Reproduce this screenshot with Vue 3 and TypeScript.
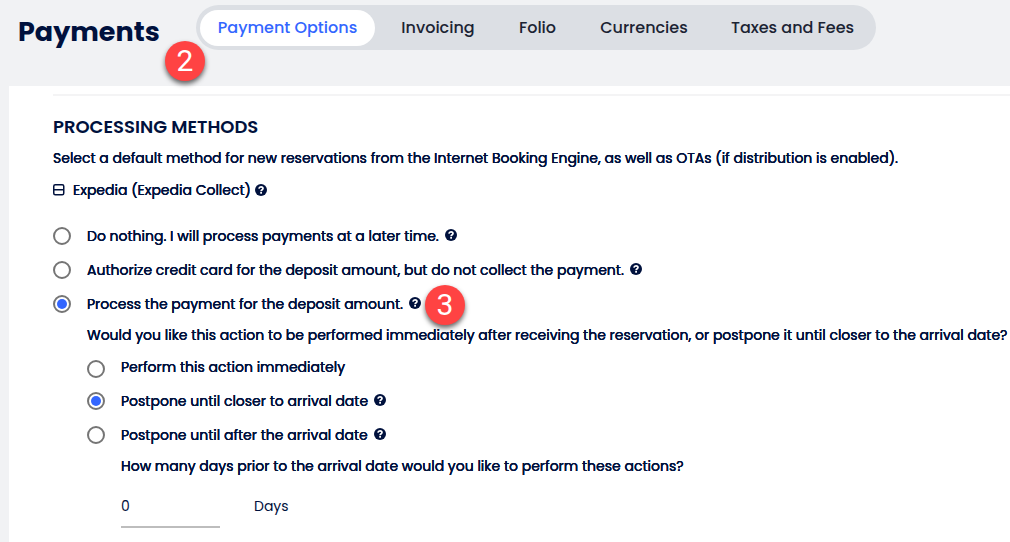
<script setup lang="ts">
import { ref } from 'vue'

interface Option {
  id: string
  label: string
  help: boolean
}

const tabs: string[] = ['Payment Options', 'Invoicing', 'Folio', 'Currencies', 'Taxes and Fees']
const activeTab = ref(tabs[0])

const methods: Option[] = [
  { id: 'nothing', label: 'Do nothing. I will process payments at a later time.', help: true },
  { id: 'authorize', label: 'Authorize credit card for the deposit amount, but do not collect the payment.', help: true },
  { id: 'process', label: 'Process the payment for the deposit amount.', help: true },
]
const method = ref('process')

const timings: Option[] = [
  { id: 'immediate', label: 'Perform this action immediately', help: false },
  { id: 'before', label: 'Postpone until closer to arrival date', help: true },
  { id: 'after', label: 'Postpone until after the arrival date', help: true },
]
const timing = ref('before')
const days = ref('0')
</script>

<template>
  <div class="page">
    <svg class="defs" aria-hidden="true">
      <symbol id="help-icon" viewBox="0 0 12 12">
        <circle cx="6" cy="6" r="6" fill="#00113d" />
        <path d="M3.9 4.6C4.1 3.4 4.9 2.8 6 2.8S8 3.5 8 4.5C8 5.8 6.1 5.7 6.1 7.2" fill="none" stroke="#fff" stroke-width="1.7" />
        <rect x="5.2" y="8" width="1.8" height="1.7" fill="#fff" />
      </symbol>
    </svg>

    <header class="header">
      <h1 class="title">Payments<span class="badge badge-title">2</span></h1>
      <nav class="tabs" aria-label="Payments">
        <button
          v-for="tab in tabs"
          :key="tab"
          type="button"
          class="tab"
          :class="{ active: tab === activeTab }"
          @click="activeTab = tab"
        >{{ tab }}</button>
      </nav>
    </header>

    <main class="panel">
      <h2 class="heading">PROCESSING METHODS</h2>
      <p class="intro">Select a default method for new reservations from the Internet Booking Engine, as well as OTAs (if distribution is enabled).</p>
      <div class="channel">
        <button type="button" class="collapse" aria-label="Collapse">
          <svg width="12" height="12" viewBox="0 0 12 12">
            <rect x="0.75" y="0.75" width="10" height="10" rx="1.5" fill="none" stroke="#00113d" stroke-width="1.5" />
            <path d="M1 5.75H11" stroke="#00113d" stroke-width="1.5" />
          </svg>
        </button>
        <span class="channel-name">Expedia (Expedia Collect)</span>
        <svg class="help"><use href="#help-icon" /></svg>
      </div>

      <div class="options">
        <div v-for="m in methods" :key="m.id" class="option">
          <input :id="m.id" v-model="method" type="radio" name="method" :value="m.id" class="radio" />
          <label :for="m.id" class="label">{{ m.label }}</label>
          <svg v-if="m.help" class="help spaced"><use href="#help-icon" /></svg>
          <span v-if="m.id === 'process'" class="badge badge-option">3</span>
        </div>

        <div class="nested">
          <p class="question">Would you like this action to be performed immediately after receiving the reservation, or postpone it until closer to the arrival date?</p>
          <div v-for="t in timings" :key="t.id" class="option" :class="{ plain: !t.help }">
            <input :id="t.id" v-model="timing" type="radio" name="timing" :value="t.id" class="radio" />
            <label :for="t.id" class="label">{{ t.label }}</label>
            <svg v-if="t.help" class="help spaced"><use href="#help-icon" /></svg>
          </div>
          <div class="nested">
            <p class="question">How many days prior to the arrival date would you like to perform these actions?</p>
            <div class="days">
              <input id="days" v-model="days" type="text" class="days-input" />
              <label for="days" class="days-label">Days</label>
            </div>
          </div>
        </div>
      </div>
    </main>
  </div>
</template>

<style>
body {
  background: #f1f2f4;
}
</style>

<style scoped>
.page {
  display: flex;
  flex-direction: column;
  min-height: 100vh;
  background: #f1f2f4;
  color: #00113d;
  font-family: Poppins, Inter, "Open Sans", sans-serif;
  font-size: 14px;
  line-height: 20px;
  overflow: hidden;
}

.page * {
  box-sizing: border-box;
}

.defs {
  position: absolute;
  width: 0;
  height: 0;
}

.header {
  display: flex;
  align-items: flex-start;
  height: 86px;
  padding: 5px 18px 0;
}

.title {
  position: relative;
  flex: 0 0 178px;
  margin: 0;
  padding-top: 9px;
  font-size: 27px;
  line-height: 36px;
  font-weight: 700;
}

.tabs {
  display: flex;
  height: 45px;
  padding: 5px 0 4px 4px;
  border-radius: 23px;
  background: #dcdfe4;
}

.tab {
  padding: 0;
  border: 0;
  border-radius: 18px;
  background: transparent;
  color: #1b2333;
  font: 500 16px/36px Poppins, Inter, "Open Sans", sans-serif;
  white-space: nowrap;
}

.tab:nth-child(1) { width: 175px; margin-right: 5px; }
.tab:nth-child(2) { width: 116px; }
.tab:nth-child(3) { width: 83px; }
.tab:nth-child(4) { width: 130px; }
.tab:nth-child(5) { width: 167px; }

.tab.active {
  background: #fff;
  color: #3366ff;
}

.panel {
  flex: 1;
  margin-left: 9px;
  padding: 8px 0 12px 44px;
  background: #fff;
}

.heading {
  margin: 0;
  padding-top: 21px;
  border-top: 2px solid #f4f4f5;
  font-size: 18px;
  line-height: 20px;
  font-weight: 600;
}

.intro,
.channel-name,
.label,
.question {
  font-weight: 400;
  text-shadow: 0 0 0 currentColor, 0 0 0 currentColor;
  white-space: nowrap;
}

.intro {
  margin: 0;
  padding-top: 11px;
}

.channel {
  display: flex;
  align-items: center;
  gap: 4px;
  padding-top: 12px;
}

.collapse {
  display: flex;
  width: 16px;
  padding: 0;
  border: 0;
  background: transparent;
}

.help {
  flex: none;
  width: 12px;
  height: 12px;
}

.spaced {
  margin: 0 0 2px 6px;
}

.options {
  padding-top: 19px;
}

.option {
  position: relative;
  display: flex;
  align-items: center;
  width: fit-content;
  height: 34px;
}

.radio {
  display: grid;
  place-items: center;
  flex: none;
  width: 18px;
  height: 18px;
  margin: 0 16px 0 0;
  appearance: none;
  border: 2px solid #757575;
  border-radius: 50%;
  background: #fff;
}

.plain .radio {
  align-self: flex-end;
  margin-bottom: 6px;
}

.radio:checked::before {
  content: "";
  width: 10px;
  height: 10px;
  border-radius: 50%;
  background: #3366ff;
}

.nested {
  padding-left: 34px;
}

.question {
  margin: 0;
  line-height: 29px;
}

.days {
  display: flex;
  align-items: center;
  gap: 34px;
  padding-top: 5px;
}

.days-input {
  width: 99px;
  height: 42px;
  padding: 0;
  border: 0;
  border-bottom: 2px solid #bdbdbd;
  background: transparent;
  color: #00113d;
  font: 400 14px/20px Poppins, Inter, "Open Sans", sans-serif;
}

.days-label {
  padding-bottom: 2px;
}

.badge {
  position: absolute;
  width: 40px;
  height: 40px;
  border-radius: 50%;
  background: #ff4343;
  box-shadow: 0 3px 5px rgba(0, 0, 0, 0.6);
  color: #fff;
  font: 400 30px/40px Roboto, "Liberation Sans", Arial, sans-serif;
  text-align: center;
}

.badge-title {
  top: 36px;
  left: 147px;
}

.badge-option {
  top: -2px;
  left: calc(100% + 4px);
}
</style>
